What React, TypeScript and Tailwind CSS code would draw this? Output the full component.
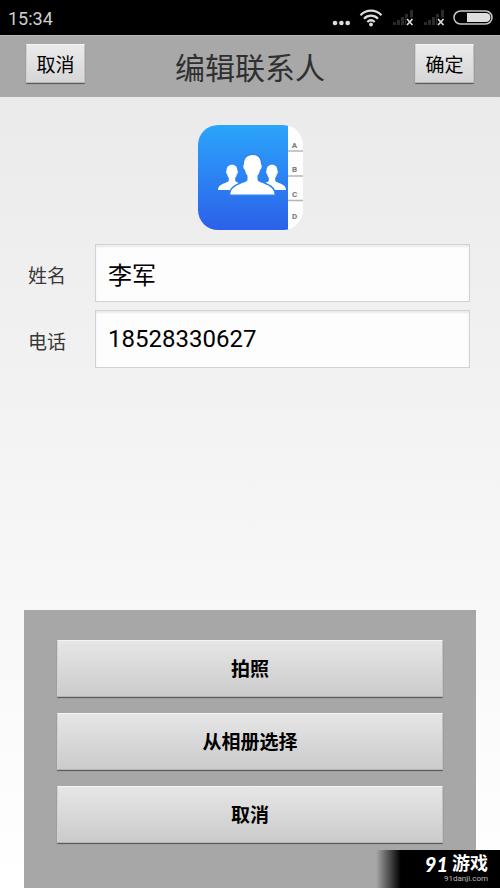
import { useState } from "react";
import type { ReactNode } from "react";

const raised =
  "border border-t-[#f4f4f4] border-l-[#d2d2d2] border-r-[#c2c2c2] border-b-[#b4b4b4] rounded-[1px] text-black shadow-[0_1px_1px_0_rgba(0,0,0,0.5)]";

function SignalIcon() {
  return (
    <svg width="24" height="18" viewBox="0 0 24 18" aria-hidden="true">
      <g fill="#2b2b2b">
        <rect x="1" y="13" width="3" height="3" />
        <rect x="5" y="11" width="3" height="5" />
        <rect x="9" y="8" width="3" height="8" />
        <rect x="13" y="5" width="3" height="11" />
        <rect x="18" y="1" width="3" height="15" />
      </g>
      <path d="M14 8.500h7.500V17H14z" fill="#000" />
      <path d="M15 10l5.500 6M20.500 10L15 16" stroke="#dedede" strokeWidth="1.700" />
    </svg>
  );
}

function StatusBar() {
  return (
    <div className="flex h-[35px] items-center justify-between bg-black pr-[7px] pl-2">
      <span className="pt-0.5 text-[18px] leading-6 text-[#d0d0d0]">15:34</span>
      <div className="flex items-center">
        <svg width="18" height="18" viewBox="0 0 18 18" fill="#dedede" aria-hidden="true">
          <circle cx="3" cy="14" r="2.300" />
          <circle cx="9.400" cy="14" r="2.300" />
          <circle cx="15.700" cy="14" r="2.300" />
        </svg>
        <svg className="ml-[9px]" width="24" height="18" viewBox="0 0 24 18" fill="none" stroke="#dedede" strokeWidth="2.200" aria-hidden="true">
          <path d="M1.500 6.200c6-6 15-6 21 0" />
          <path d="M5 9.700c4-4 10-4 14 0" />
          <path d="M8.300 13c2.200-2.100 5.200-2.100 7.400 0" />
          <circle cx="12" cy="15.500" r="1.900" fill="#dedede" stroke="none" />
        </svg>
        <span className="ml-[9px] flex gap-[7px]">
          <SignalIcon />
          <SignalIcon />
        </span>
        <svg className="ml-[6px]" width="40" height="16" viewBox="0 0 40 16" aria-hidden="true">
          <rect x="1" y="1" width="38" height="13" rx="6.500" fill="#000" stroke="#c8c8c8" strokeWidth="1.500" />
          <path d="M14 3h19a4.500 4.500 0 0 1 0 9H14z" fill="#dedede" />
        </svg>
      </div>
    </div>
  );
}

function HeaderButton({ children }: { children: ReactNode }) {
  return (
    <button type="button" className={`h-[39px] w-[59px] bg-linear-to-b from-[#ebebeb] to-[#d6d6d6] pt-1 text-[19px] leading-6 ${raised}`}>
      {children}
    </button>
  );
}

function SheetButton({ children }: { children: ReactNode }) {
  return (
    <button type="button" className={`h-[57px] bg-linear-to-b from-[#e6e6e6] to-[#cbcbcb] pt-0.5 text-[19px] leading-6 font-bold ${raised}`}>
      {children}
    </button>
  );
}

function ContactsIcon() {
  return (
    <svg width="105" height="105" viewBox="0 0 105 105" role="img" aria-label="联系人">
      <defs>
        <linearGradient id="blue" x1="0" y1="0" x2="0" y2="1">
          <stop offset="0" stopColor="#2ba5fb" />
          <stop offset="1" stopColor="#2c60ea" />
        </linearGradient>
        <clipPath id="tile">
          <rect width="105" height="105" rx="20" />
        </clipPath>
        <path
          id="person"
          d="M0-39.500c5.500 0 8.500 3.500 8.500 9.500 1.300.5.800 4.500-1 5.500-.5 3-1.500 4.500-2.500 5.500v4.500c1 3.500 17 4 17 14.500h-44c0-10.500 16-11 17-14.500V-19c-1-1-2-2.500-2.500-5.500-1.800-1-2.300-5-1-5.500 0-6 3-9.500 8.500-9.500z"
        />
      </defs>
      <g clipPath="url(#tile)">
        <rect width="105" height="105" fill="#fdfdfd" />
        <rect width="90" height="105" fill="url(#blue)" />
        <g fill="#fff">
          <use href="#person" transform="translate(34 65) scale(.64)" />
          <use href="#person" transform="translate(74 65) scale(.64)" />
        </g>
        <use href="#person" transform="translate(54.500 69.500)" fill="#fff" stroke="#2f83f3" strokeWidth="3" paintOrder="stroke" />
        <path d="M90 26h15M90 51h15M90 75.500h15" stroke="#b5b5b5" strokeWidth="1.500" />
        <g fill="#777" fontSize="8" fontWeight="bold" textAnchor="middle">
          <text x="96.500" y="23">A</text>
          <text x="96.500" y="47">B</text>
          <text x="96.500" y="72">C</text>
          <text x="96.500" y="94">D</text>
        </g>
      </g>
    </svg>
  );
}

type FieldProps = {
  id: string;
  label: string;
  type: string;
  value: string;
  onChange: (value: string) => void;
};

function Field({ id, label, type, value, onChange }: FieldProps) {
  return (
    <div className="flex items-center">
      <label htmlFor={id} className="w-[67px] shrink-0 pt-2 text-[19px] leading-6 text-[#383838]">
        {label}
      </label>
      <input
        id={id}
        type={type}
        value={value}
        onChange={(e) => onChange(e.target.value)}
        className="h-[58px] min-w-0 flex-1 border border-[#d2d2d2] bg-[#fdfdfd] px-3 text-[24px] text-black shadow-[inset_0_2px_2px_rgba(0,0,0,0.08)] outline-none"
      />
    </div>
  );
}

export default function App() {
  const [name, setName] = useState("李军");
  const [phone, setPhone] = useState("18528330627");

  return (
    <div className="relative flex min-h-screen flex-col bg-linear-to-b from-[#e8e8e8] to-white font-[Roboto,'Noto_Sans_CJK_SC',sans-serif]">
      <StatusBar />
      <header className="flex h-[62px] items-start justify-between border-t border-[#b8b8b8] bg-[#a8a8a8] px-[26px] pt-2">
        <HeaderButton>取消</HeaderButton>
        <h1 className="text-[30px] leading-[50px] text-[#303030]">编辑联系人</h1>
        <HeaderButton>确定</HeaderButton>
      </header>

      <main className="flex flex-col pt-7">
        <div className="flex justify-center">
          <ContactsIcon />
        </div>
        <form className="mt-[14px] flex flex-col gap-2 pr-[30px] pl-7">
          <Field id="name" label="姓名" type="text" value={name} onChange={setName} />
          <Field id="phone" label="电话" type="tel" value={phone} onChange={setPhone} />
        </form>
      </main>

      <section className="mx-6 mt-auto flex flex-col gap-4 bg-[#a7a7a7] px-[33px] pt-[30px] pb-[45px]">
        <SheetButton>拍照</SheetButton>
        <SheetButton>从相册选择</SheetButton>
        <SheetButton>取消</SheetButton>
      </section>

      <div className="absolute right-0 bottom-0 flex h-[38px] w-[124px] flex-col items-end bg-linear-to-r from-transparent to-black to-20% pt-1 pr-3 text-white">
        <div className="flex items-center gap-1 leading-5">
          <span className="font-[Lato] text-[20px] font-black italic">91</span>
          <span className="text-[18px] font-bold">游戏</span>
        </div>
        <span className="text-[8px] leading-[10px] text-[#bdbdbd]">91danji.com</span>
      </div>
    </div>
  );
}
